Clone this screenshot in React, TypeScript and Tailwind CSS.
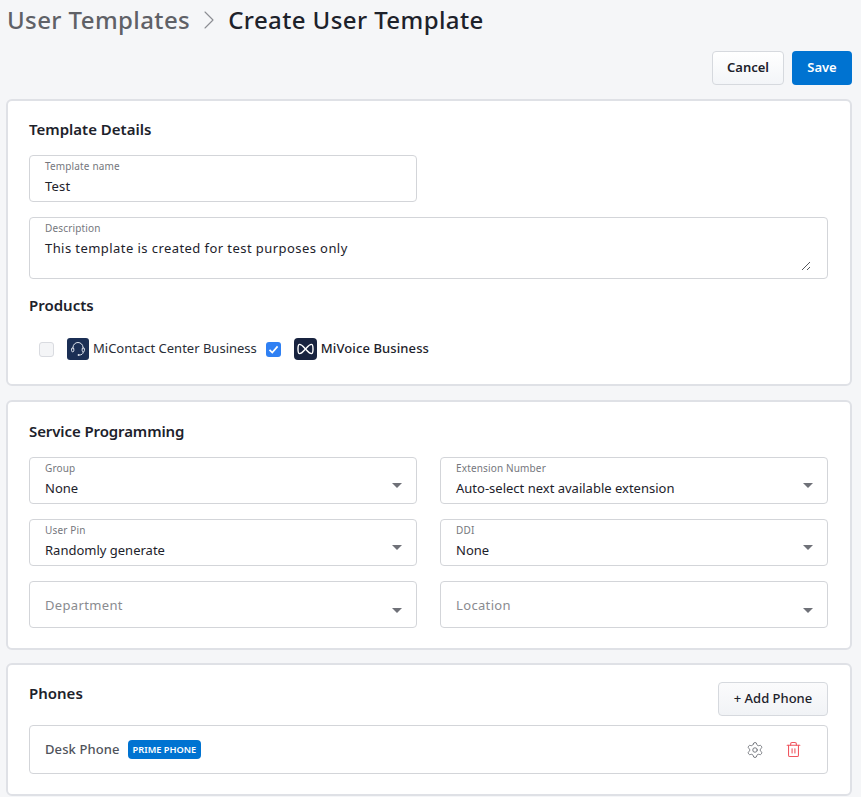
import { ReactNode } from "react";
import { ChevronRight, Settings, Trash2 } from "lucide-react";

const FONT = "font-['Noto_Sans','Open_Sans',sans-serif]";

function Card({ className, children }: { className: string; children: ReactNode }) {
  return (
    <section
      className={`rounded-[6px] border-2 border-[#dfe1e6] bg-white pr-[22px] pl-[21px] ${className}`}
    >
      {children}
    </section>
  );
}

function Title({ children }: { children: ReactNode }) {
  return <h2 className="text-[15px] leading-5 font-semibold text-[#1d222b]">{children}</h2>;
}

function Caret({ low }: { low?: boolean }) {
  return (
    <span
      className={`absolute right-[14px] h-0 w-0 border-x-[5px] border-t-[5px] border-x-transparent border-t-[#6f7178] ${
        low ? "top-[26px]" : "top-[25px]"
      }`}
    />
  );
}

function SelectField({ label, value }: { label: string; value: string }) {
  return (
    <div className="relative h-[47px] rounded-[4px] border border-[#d3d5d9] bg-white px-[15px] pt-[3px]">
      <div className="text-[10px] leading-[14px] tracking-[0.15px] text-[#75777d]">{label}</div>
      <div className="mt-[4px] text-[13px] leading-[18px] text-[#1d222b]">{value}</div>
      <Caret />
    </div>
  );
}

function EmptySelect({ label }: { label: string }) {
  return (
    <div className="relative flex h-[47px] items-center rounded-[4px] border border-[#d3d5d9] bg-white px-[15px] pt-[3px]">
      <span className="text-[13px] tracking-[0.35px] text-[#8a8b90]">{label}</span>
      <Caret low />
    </div>
  );
}

function HeadsetLogo() {
  return (
    <span className="flex h-[22px] w-[22px] shrink-0 items-center justify-center rounded-[3px] bg-[#1b2f55]">
      <svg width="18" height="18" viewBox="0 0 18 18" fill="none" stroke="#dfe4ee" strokeWidth="1">
        <path d="M4 9V7.5a5 5 0 0 1 10 0V9" />
        <rect x="2.6" y="7.8" width="2.2" height="4" rx="1.1" />
        <rect x="13.2" y="7.8" width="2.2" height="4" rx="1.1" />
        <path d="M14.2 12c0 2-1.8 3-4 3" />
        <circle cx="9.6" cy="15" r="1" fill="#dfe4ee" stroke="none" />
      </svg>
    </span>
  );
}

function VoiceLogo() {
  return (
    <span className="flex h-[22px] w-[23px] shrink-0 items-center justify-center rounded-[4px] bg-[#18233f]">
      <svg width="17" height="12" viewBox="0 0 17 12" fill="none" stroke="#ffffff" strokeWidth="1.4">
        <path d="M2.6 1.4C5 1.4 6.6 4 8.5 6 6.6 8 5 10.6 2.6 10.6 1.4 10.6 1 9.4 1 6s.4-4.6 1.6-4.6Z" />
        <path d="M14.4 1.4C12 1.4 10.4 4 8.5 6c1.9 2 3.5 4.6 5.9 4.6 1.2 0 1.6-1.2 1.6-4.6s-.4-4.6-1.6-4.6Z" />
      </svg>
    </span>
  );
}

export default function App() {
  return (
    <div className={`${FONT} h-[797px] w-[861px] overflow-hidden bg-[#f5f6f8] pr-[9px] pl-[6px]`}>
      {/* Breadcrumb */}
      <header className="flex h-[40px] items-center gap-[3px] pl-px text-[24px] font-medium tracking-[0.4px]">
        <span className="text-[#5f6167]">User Templates</span>
        <ChevronRight size={32} strokeWidth={0.8} className="text-[#8b8d92]" />
        <span className="text-[#1d222b]">Create User Template</span>
      </header>

      <div className="mt-[11px] flex justify-end gap-[8px]">
        <button className="h-[34px] w-[72px] rounded-[4px] border border-[#d6d9de] bg-gradient-to-b from-white to-[#f3f5f8] text-[13px] font-semibold text-[#1d222b]">
          Cancel
        </button>
        <button className="h-[34px] w-[60px] rounded-[4px] bg-[#0073d1] text-[13px] font-semibold text-white">
          Save
        </button>
      </div>

      {/* Template details */}
      <Card className="mt-[14px] h-[287px] pt-[18px]">
        <Title>Template Details</Title>
        <div className="mt-[16px] h-[47px] w-[388px] rounded-[4px] border border-[#d3d5d9] px-[15px] pt-[3px]">
          <div className="text-[10px] leading-[14px] tracking-[0.15px] text-[#75777d]">Template name</div>
          <div className="mt-[4px] text-[13px] leading-[18px] tracking-[0.2px] text-[#1d222b]">Test</div>
        </div>
        <div className="relative mt-[15px] h-[62px] rounded-[4px] border border-[#d3d5d9] px-[15px] pt-[3px]">
          <div className="text-[10px] leading-[14px] tracking-[0.15px] text-[#75777d]">Description</div>
          <div className="mt-[4px] text-[13px] leading-[18px] tracking-[0.43px] text-[#1d222b]">
            This template is created for test purposes only
          </div>
          <svg
            className="absolute right-[16px] bottom-[7px]"
            width="10"
            height="10"
            viewBox="0 0 10 10"
            fill="none"
            stroke="#55575c"
            strokeWidth="1"
          >
            <path d="M1 9 9 1M6 9l3-3" />
          </svg>
        </div>
        <div className="mt-[16px]">
          <Title>Products</Title>
        </div>
        <div className="mt-[23px] flex h-[22px] items-center pl-[10px]">
          <span className="h-[15px] w-[15px] rounded-[3px] border border-[#d9dbe0] bg-[#f4f5f7]" />
          <span className="ml-[13px]">
            <HeadsetLogo />
          </span>
          <span className="ml-[4px] text-[13px] text-[#2a2e37]">MiContact Center Business</span>
          <span className="ml-[9px] flex h-[15px] w-[15px] items-center justify-center rounded-[3px] bg-[#2f80f3]">
            <svg width="11" height="11" viewBox="0 0 11 11" fill="none" stroke="#ffffff" strokeWidth="1.7">
              <path d="M1.5 5.8 4.3 8.6 9.6 2.4" />
            </svg>
          </span>
          <span className="ml-[13px]">
            <VoiceLogo />
          </span>
          <span className="ml-[4px] text-[13px] font-medium tracking-[0.1px] text-[#1d222b]">MiVoice Business</span>
        </div>
      </Card>

      {/* Service programming */}
      <Card className="mt-[14px] h-[250px] pt-[19px]">
        <h2 className="text-[15px] leading-5 font-semibold tracking-[-0.1px] text-[#1d222b]">Service Programming</h2>
        <div className="mt-[16px] grid grid-cols-2 gap-x-[23px] gap-y-[15px]">
          <SelectField label="Group" value="None" />
          <SelectField label="Extension Number" value="Auto-select next available extension" />
          <SelectField label="User Pin" value="Randomly generate" />
          <SelectField label="DDI" value="None" />
          <EmptySelect label="Department" />
          <EmptySelect label="Location" />
        </div>
      </Card>

      {/* Phones */}
      <Card className="mt-[13px] h-[133px] pt-[17px]">
        <div className="flex items-start justify-between">
          <div className="pt-[1px]">
            <Title>Phones</Title>
          </div>
          <button className="h-[34px] w-[110px] rounded-[4px] border border-[#d6d9de] bg-gradient-to-b from-[#fbfbfc] to-[#f1f3f6] text-[13px] font-medium text-[#1d222b]">
            + Add Phone
          </button>
        </div>
        <div className="mt-[9px] flex h-[49px] items-center rounded-[4px] border border-[#d3d5d9] pr-[25px] pl-[15px]">
          <span className="text-[13px] font-medium tracking-[0.1px] text-[#50535b]">Desk Phone</span>
          <span className="ml-[8px] flex h-[19px] items-center rounded-[4px] bg-[#0073d1] px-[5px] text-[9.25px] font-semibold text-white">
            PRIME PHONE
          </span>
          <Settings size={18} strokeWidth={1.2} className="ml-auto text-[#6b6e75]" />
          <Trash2 size={17} strokeWidth={1.5} className="ml-[21px] text-[#f0555f]" />
        </div>
      </Card>
    </div>
  );
}
